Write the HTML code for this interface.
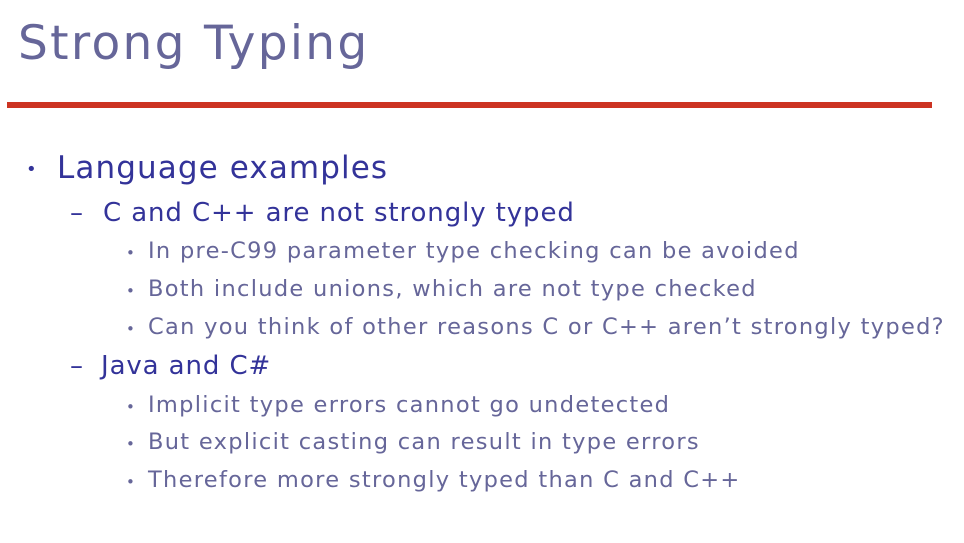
<!DOCTYPE html>
<html><head><style>
body{margin:0;width:964px;height:543px;background:#fff;position:relative;overflow:hidden;font-family:"DejaVu Sans","Liberation Sans",sans-serif}
div{position:absolute;white-space:nowrap;line-height:1}
.t{left:18px;top:20px;font-size:47px;color:#666699;letter-spacing:2.3px}
.bar{left:7px;top:102px;width:925px;height:6px;background:#cc3322}
.l1{font-size:31px;color:#333399;letter-spacing:1.1px}
.l2{font-size:26px;color:#333399;letter-spacing:0.9px}
.l3{font-size:22.5px;color:#666699;letter-spacing:1.3px}
.b{font-size:18px;color:#333399}
.b3{font-size:15px;color:#666699}
</style></head><body>
<div class="t">Strong Typing</div>
<div class="bar"></div>
<div class="b" style="left:26px;top:161px">•</div>
<div class="l1" style="left:57px;top:153px">Language examples</div>
<div class="l2" style="left:70px;top:200px">–</div>
<div class="l2" style="left:103px;top:200px">C and C++ are not strongly typed</div>
<div class="b3" style="left:126px;top:246px">•</div>
<div class="l3" style="left:148px;top:240px">In pre-C99 parameter type checking can be avoided</div>
<div class="b3" style="left:126px;top:284px">•</div>
<div class="l3" style="left:148px;top:278px">Both include unions, which are not type checked</div>
<div class="b3" style="left:126px;top:322px">•</div>
<div class="l3" style="left:148px;top:316px">Can you think of other reasons C or C++ aren’t strongly typed?</div>
<div class="l2" style="left:70px;top:353px">–</div>
<div class="l2" style="left:101px;top:353px">Java and C#</div>
<div class="b3" style="left:126px;top:400px">•</div>
<div class="l3" style="left:148px;top:394px">Implicit type errors cannot go undetected</div>
<div class="b3" style="left:126px;top:437px">•</div>
<div class="l3" style="left:148px;top:431px">But explicit casting can result in type errors</div>
<div class="b3" style="left:126px;top:475px">•</div>
<div class="l3" style="left:148px;top:469px">Therefore more strongly typed than C and C++</div>
</body></html>
